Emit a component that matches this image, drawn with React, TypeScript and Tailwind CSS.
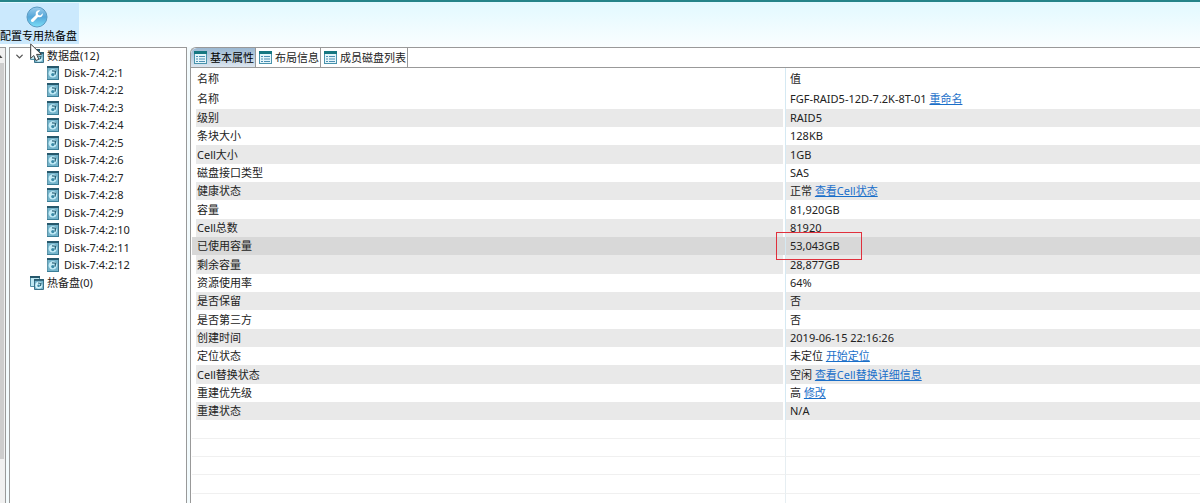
import { ChevronDown } from "lucide-react";

const disks = Array.from({ length: 12 }, (_, i) => `Disk-7:4:2:${i + 1}`);

type Property = {
  name: string;
  value: string;
  action?: string;
  selected?: boolean;
};

const properties: Property[] = [
  { name: "级别", value: "RAID5" },
  { name: "条块大小", value: "128KB" },
  { name: "Cell大小", value: "1GB" },
  { name: "磁盘接口类型", value: "SAS" },
  { name: "健康状态", value: "正常", action: "查看Cell状态" },
  { name: "容量", value: "81,920GB" },
  { name: "Cell总数", value: "81920" },
  { name: "已使用容量", value: "53,043GB", selected: true },
  { name: "剩余容量", value: "28,877GB" },
  { name: "资源使用率", value: "64%" },
  { name: "是否保留", value: "否" },
  { name: "是否第三方", value: "否" },
  { name: "创建时间", value: "2019-06-15 22:16:26" },
  { name: "定位状态", value: "未定位", action: "开始定位" },
  { name: "Cell替换状态", value: "空闲", action: "查看Cell替换详细信息" },
  { name: "重建优先级", value: "高", action: "修改" },
  { name: "重建状态", value: "N/A" },
];

const tabs = ["基本属性", "布局信息", "成员磁盘列表"];

function WrenchIcon() {
  return (
    <svg width="22" height="22" viewBox="0 0 22 22" aria-hidden="true">
      <defs>
        <linearGradient id="ball" x1="0" y1="0" x2="0" y2="1">
          <stop offset="0" stopColor="#9ccdec" />
          <stop offset="0.5" stopColor="#55a6d9" />
          <stop offset="1" stopColor="#7be0f8" />
        </linearGradient>
      </defs>
      <circle cx="11" cy="11" r="10" fill="url(#ball)" stroke="#5a9bc2" />
      <path
        d="M16.8 7.2l-2.5 2.3-2-.6-.6-2 2.4-2.4c-2.2-.7-4.6.9-4.4 3.4 0 .5.1.8.2 1.2l-4.6 4.5c-1.3 1.4.7 3.4 2.1 2.1l4.6-4.6c2.7.9 5.3-1.2 4.8-3.9z"
        fill="#fff"
      />
    </svg>
  );
}

function DiskIcon() {
  return (
    <svg width="12" height="14" viewBox="0 0 12 14" aria-hidden="true">
      <rect x="0.5" y="0.5" width="11" height="13" fill="#74b4cb" stroke="#5f97ab" />
      <path d="M0 1h12" stroke="#26586c" strokeWidth="2" />
      <path d="M11.5 2v12" stroke="#3a7188" />
      <circle cx="5.8" cy="7.4" r="4.2" fill="#c4ecf7" />
      <path d="M5 4.8l3.6.4-.6 3.4" stroke="#2b6479" strokeWidth="1.3" fill="none" />
      <circle cx="5.8" cy="8.6" r="1.6" fill="#3c8aa6" />
      <path d="M0 13.5h12" stroke="#3a7f98" />
    </svg>
  );
}

function DiskGroupIcon() {
  return (
    <svg width="14" height="14" viewBox="0 0 14 14" aria-hidden="true">
      <path d="M0.5 0.5h9v10h-9z" fill="#bfe8f2" stroke="#4f8ea5" />
      <path d="M0 1h10" stroke="#26586c" strokeWidth="2" />
      <path d="M4.5 3.5h9v10h-9z" fill="#74b4cb" stroke="#3a7188" />
      <path d="M4 4h10" stroke="#26586c" strokeWidth="1.6" />
      <circle cx="8.8" cy="9.2" r="3.5" fill="#d3f3fb" />
      <path d="M8 7l3 .4-.6 2.6" stroke="#2b6479" strokeWidth="1.2" fill="none" />
      <circle cx="8.6" cy="9.8" r="1.3" fill="#3c8aa6" />
    </svg>
  );
}

function SheetIcon() {
  return (
    <svg width="13" height="13" viewBox="0 0 13 13" aria-hidden="true">
      <rect x="0.5" y="0.5" width="12" height="12" fill="#e4f5fa" stroke="#4a94ad" />
      <path d="M0 1.5h13" stroke="#167781" strokeWidth="3" />
      <path d="M2 5.5h2M2 8h2M2 10.5h2M5 5.5h6M5 8h6M5 10.5h6" stroke="#4c8fb3" />
    </svg>
  );
}

function Cursor() {
  return (
    <svg
      className="absolute left-[30px] top-[43px] z-10"
      width="13"
      height="19"
      viewBox="0 0 13 19"
      aria-hidden="true"
    >
      <path
        d="M0.7 1v14.4l3.1-2.9 2.2 5 2.8-1.2-2.2-4.9h4.8z"
        fill="#fff"
        stroke="#444"
      />
    </svg>
  );
}

function rowColors(index: number, selected?: boolean) {
  if (selected) return "border-x-[#d8d8d8] bg-[#d8d8d8]";
  return index % 2 === 0 ? "border-x-white bg-[#e9e9e9]" : "border-x-white";
}

export default function App() {
  return (
    <div className="relative flex h-screen flex-col overflow-hidden bg-white font-['Noto_Sans','Noto_Sans_CJK_SC',sans-serif] text-[11px] leading-[16px] text-[#222]">
      {/* Toolbar */}
      <header className="flex h-[47px] shrink-0 border-t-2 border-[#258489] bg-linear-to-b from-[#e2f9ff] to-[#fafeff]">
        <button className="mt-px flex h-[41px] w-[79px] flex-col items-start bg-[#cbe9fd]">
          <span className="ml-[26px] mt-[3px]">
            <WrenchIcon />
          </span>
          <span className="whitespace-nowrap text-black">配置专用热备盘</span>
        </button>
      </header>
      <Cursor />

      <div className="flex min-h-0 flex-1 bg-[#f3fbfd]">
        {/* Scrollbar of the neighbouring pane */}
        <div className="flex w-[6px] shrink-0 flex-col border-r border-t border-[#999] bg-[#f0f0f0]">
          <svg className="mt-[6px]" width="4" height="5" viewBox="0 0 4 5" aria-hidden="true">
            <path d="M0 1l2.5 3H0z" fill="#444" />
          </svg>
          <div className="mt-1 h-[396px] w-1 bg-[#cdcdcd]" />
        </div>

        {/* Disk tree */}
        <nav className="ml-[3px] w-[178px] shrink-0 border-x border-t border-[#999] bg-white">
          <ul>
            <li>
              <div className="flex h-[16px] items-center pl-1">
                <button aria-label="折叠" className="mr-[5px]">
                  <ChevronDown size={11} strokeWidth={3} color="#555" />
                </button>
                <DiskGroupIcon />
                <span className="ml-[3px]">数据盘(12)</span>
              </div>
              <ul className="[&>li:nth-child(even)]:h-[18px]">
                {disks.map((disk) => (
                  <li key={disk} className="flex h-[17px] items-center pl-[37px]">
                    <DiskIcon />
                    <span className="ml-[5px]">{disk}</span>
                  </li>
                ))}
              </ul>
            </li>
            <li className="flex h-[18px] items-center pl-5">
              <DiskGroupIcon />
              <span className="ml-[3px]">热备盘(0)</span>
            </li>
          </ul>
        </nav>

        {/* Properties */}
        <main className="ml-[3px] flex min-w-0 flex-1 flex-col rounded-tl-md border-l border-t border-[#999] bg-white">
          <div role="tablist" className="flex h-[20px] shrink-0 border-b border-[#999]">
            {tabs.map((tab, i) => (
              <button
                key={tab}
                role="tab"
                aria-selected={i === 0}
                className={`flex items-center gap-[3px] whitespace-nowrap border-r border-[#999] pl-[3px] pr-px ${
                  i === 0
                    ? "rounded-tl-md bg-linear-to-b from-[#9bb8d2] to-[#dce6ef] text-black"
                    : "bg-white"
                }`}
              >
                <SheetIcon />
                {tab}
              </button>
            ))}
          </div>

          <table className="ml-px table-fixed border-separate border-spacing-0 text-left">
            <thead>
              <tr className="h-[21px]">
                <th className="w-[593px] py-0 pl-[5px] font-normal">名称</th>
                <th className="border-l border-[#d5e9f3] py-0 pl-1 font-normal">值</th>
              </tr>
            </thead>
            <tbody>
              <tr className="h-[20px]">
                <td className="py-0 pl-[5px]">名称</td>
                <td className="border-l border-[#d5e9f3] py-0 pl-1">
                  FGF-RAID5-12D-7.2K-8T-01{" "}
                  <a href="#" className="text-[#1a6fc9] underline">
                    重命名
                  </a>
                </td>
              </tr>
            </tbody>
            <tbody className="[&>tr:nth-child(3n)]:h-[19px]">
              {properties.map((p, i) => (
                <tr key={p.name} className="h-[18px]">
                  <td
                    className={`border-l-4 border-r-2 py-0 pl-px ${rowColors(i, p.selected)}`}
                  >
                    {p.name}
                  </td>
                  <td
                    className={`relative border-l border-l-[#d5e9f3] py-0 pl-1 ${
                      p.selected ? "bg-[#d8d8d8]" : i % 2 === 0 ? "bg-[#e9e9e9]" : ""
                    }`}
                  >
                    {p.value}
                    {p.action && (
                      <>
                        {" "}
                        <a href="#" className="text-[#1a6fc9] underline">
                          {p.action}
                        </a>
                      </>
                    )}
                    {p.selected && (
                      <span className="absolute -left-[10px] -top-[5px] z-10 h-[28px] w-[86px] border border-[#e0303c]" />
                    )}
                  </td>
                </tr>
              ))}
              {[0, 1, 2, 3, 4].map((row) => (
                <tr key={row} className="h-[18px]">
                  <td className="border-b border-[#f0f0f0] p-0" />
                  <td className="border-b border-l border-b-[#f0f0f0] border-l-[#e6eef2] p-0" />
                </tr>
              ))}
            </tbody>
          </table>
        </main>
      </div>
    </div>
  );
}
